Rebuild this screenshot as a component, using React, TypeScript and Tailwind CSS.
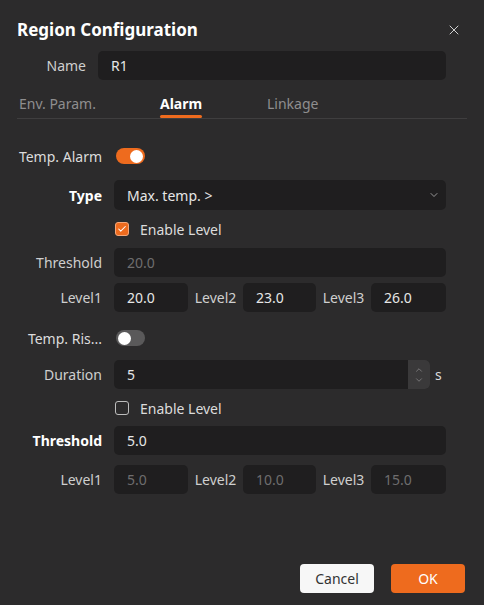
import { ChevronDown, ChevronUp, X, Check } from 'lucide-react';

const inputClass = "h-[29px] rounded-[5px] bg-[#1f1e1f] px-[13px] flex items-center text-[14px]";
const labelClass = "w-[85px] shrink-0 text-right text-[14px] text-[#cfcfcf] whitespace-nowrap";

function Toggle({ on }: { on: boolean }) {
  return (
    <div className={`w-[29px] h-[16px] rounded-full flex items-center px-[2px] ${on ? "bg-[#ee6b1e] justify-end" : "bg-[#5a595a] justify-start"}`}>
      <div className="w-[13px] h-[13px] rounded-full bg-white" />
    </div>
  );
}

function CheckBox({ checked }: { checked: boolean }) {
  return (
    <div className="flex items-center gap-[11px] h-[14px]">
      {checked ? (
        <div className="w-[14px] h-[14px] rounded-[3px] bg-[#ee6b1e] border border-[#f4a77a] flex items-center justify-center">
          <Check size={10} strokeWidth={2.5} className="text-white" />
        </div>
      ) : (
        <div className="w-[14px] h-[14px] rounded-[3px] border border-[#bdbdbd]" />
      )}
      <span className="text-[14px] text-[#dcdcdc]">Enable Level</span>
    </div>
  );
}

function LevelRow({ values, disabled }: { values: string[]; disabled?: boolean }) {
  const text = disabled ? "text-[#6e6d6e]" : "text-[#e6e6e6]";
  return (
    <div className="flex items-center">
      <div className={labelClass}>Level1</div>
      <div className={`${inputClass} ${text} ml-[12px] w-[74px]`}>{values[0]}</div>
      <div className="w-[55px] text-center text-[14px] text-[#cfcfcf]">Level2</div>
      <div className={`${inputClass} ${text} w-[73px]`}>{values[1]}</div>
      <div className="w-[55px] text-center text-[14px] text-[#cfcfcf]">Level3</div>
      <div className={`${inputClass} ${text} w-[75px]`}>{values[2]}</div>
    </div>
  );
}

export default function App() {
  return (
    <div className="w-[484px] h-[605px] bg-[#2c2b2c] flex flex-col text-[#e6e6e6]" style={{ fontFamily: '"Noto Sans", "Open Sans", sans-serif' }}>
      <div className="flex items-center justify-between pl-[17px] pr-[22px] pt-[18px]">
        <h1 className="text-[17px] font-bold text-white leading-[24px]">Region Configuration</h1>
        <X size={16} strokeWidth={1.5} className="text-[#d0d0d0]" />
      </div>

      <div className="flex items-center mt-[9px]">
        <div className="w-[86px] text-right text-[14px] text-[#cfcfcf]">Name</div>
        <div className={`${inputClass} text-[#e6e6e6] ml-[12px] w-[348px]`}>R1</div>
      </div>

      <div className="mx-[17px] mt-[9px] border-b border-[#3f3e3f] flex text-[14px] h-[30px]">
        <div className="pl-[2px] w-[143px] pt-[4px] text-[#8f8e8f]">Env. Param.</div>
        <div className="w-[107px] pt-[4px] relative">
          <span className="font-bold text-white">Alarm</span>
          <div className="absolute left-0 w-[42px] bottom-0 h-[3px] rounded-full bg-[#ee6b1e]" />
        </div>
        <div className="pt-[4px] text-[#8f8e8f]">Linkage</div>
      </div>

      <div className="flex flex-col mt-[29px] pl-[17px]">
        <div className="flex items-center h-[16px]">
          <div className={labelClass + " text-[#dcdcdc]"}>Temp. Alarm</div>
          <div className="ml-[14px]"><Toggle on /></div>
        </div>

        <div className="flex items-center mt-[16px]">
          <div className={labelClass + " font-bold text-white"}>Type</div>
          <div className={`${inputClass} text-[#e6e6e6] ml-[12px] w-[332px] h-[30px] justify-between pr-[6px]`}>
            <span>Max. temp. &gt;</span>
            <ChevronDown size={12} strokeWidth={1.5} className="text-[#bdbdbd]" />
          </div>
        </div>

        <div className="ml-[98px] mt-[12px]"><CheckBox checked /></div>

        <div className="flex items-center mt-[12px]">
          <div className={labelClass}>Threshold</div>
          <div className={`${inputClass} ml-[12px] w-[332px] text-[#6e6d6e]`}>20.0</div>
        </div>

        <div className="mt-[6px]">
          <LevelRow values={["20.0", "23.0", "26.0"]} />
        </div>

        <div className="flex items-center mt-[18px] h-[16px]">
          <div className={labelClass + " text-[#dcdcdc] pl-[7px]"}>Temp. Ris...</div>
          <div className="ml-[14px]"><Toggle on={false} /></div>
        </div>

        <div className="flex items-center mt-[14px]">
          <div className={labelClass}>Duration</div>
          <div className={`${inputClass} text-[#e6e6e6] ml-[12px] w-[316px] pr-0 justify-between`}>
            <span>5</span>
            <div className="w-[22px] h-[29px] bg-[#3a393a] rounded-r-[5px] flex flex-col items-center justify-center text-[#9a999a]">
              <ChevronUp size={10} strokeWidth={1.5} />
              <ChevronDown size={10} strokeWidth={1.5} />
            </div>
          </div>
          <span className="ml-[5px] text-[14px] text-[#dcdcdc]">s</span>
        </div>

        <div className="ml-[98px] mt-[12px]"><CheckBox checked={false} /></div>

        <div className="flex items-center mt-[11px]">
          <div className={labelClass + " font-bold text-white"}>Threshold</div>
          <div className={`${inputClass} text-[#e6e6e6] ml-[12px] w-[332px]`}>5.0</div>
        </div>

        <div className="mt-[10px]">
          <LevelRow values={["5.0", "10.0", "15.0"]} disabled />
        </div>
      </div>

      <div className="mt-auto flex justify-end gap-[17px] pr-[19px] pb-[12px]">
        <button className="w-[74px] h-[29px] rounded-[4px] bg-[#f7f7f7] text-[#333] text-[14px]">Cancel</button>
        <button className="w-[74px] h-[29px] rounded-[4px] bg-[#ee6b1e] text-white text-[14px]">OK</button>
      </div>
    </div>
  );
}
